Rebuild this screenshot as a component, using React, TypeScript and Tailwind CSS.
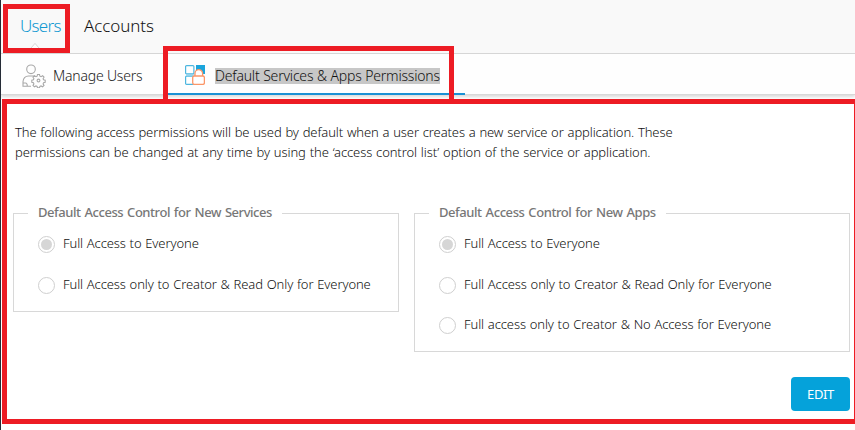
function UserGearIcon() {
  return (
    <svg width="24" height="24" viewBox="0 0 24 24" fill="none" stroke="#a8a8a8" strokeWidth="1.1">
      <circle cx="9" cy="5.3" r="4.3" />
      <path d="M9 22.3H1v-4.500c0-3.600 2.300-5.800 5.600-5.800h4.600c.8 0 1.500.1 2.100.4M1 19h2.500c1.200 0 1.800.7 1.800 3" />
      <circle cx="16.500" cy="16.500" r="1.400" />
      <path d="M15.500 10.500h2l.4 1.700 1.100.5 1.600-.9 1.400 1.400-.9 1.500.5 1.200 1.600.4v2l-1.600.4-.5 1.200.9 1.500-1.400 1.400-1.600-.9-1.100.5-.4 1.400h-2l-.4-1.400-1.100-.5-1.600.9-1.400-1.400.9-1.500-.5-1.200-1.600-.4v-2l1.600-.4.5-1.200-.9-1.500 1.400-1.400 1.600.9 1.100-.5z" />
    </svg>
  );
}

function AppsLockIcon() {
  return (
    <svg width="20" height="20" viewBox="0 0 20 20" fill="none">
      <path d="M1 9h9v2H1z" fill="#d5effa" />
      <path d="M11 0h9v9h-9z" fill="#1ba5dc" />
      <rect x=".6" y=".6" width="8.300" height="8.300" rx="1" fill="white" stroke="#4db6df" strokeWidth="1.200" />
      <rect x=".6" y="11.100" width="8.300" height="8.300" rx="1" fill="white" stroke="#4db6df" strokeWidth="1.200" />
      <path d="M10 11V8.500a3.800 3.800 0 0 1 7.600 0V11" fill="white" stroke="#fb9668" strokeWidth="1.300" />
      <rect x="7.700" y="11" width="11.700" height="8.400" rx="1.600" fill="white" stroke="#fb9668" strokeWidth="1.300" />
    </svg>
  );
}

function Radio({ checked, label }: { checked?: boolean; label: string }) {
  return (
    <label className="flex h-[17px] items-center gap-2">
      <span className="flex size-[17px] shrink-0 items-center justify-center rounded-full border border-[#cfcfcf] bg-white">
        {checked && <span className="size-[11px] rounded-full bg-[#d6d6d6]" />}
      </span>
      <span className="-mt-[2px] whitespace-nowrap text-[13px] leading-[17px] tracking-[-0.1px] text-[#111] [word-spacing:0.5px]">{label}</span>
    </label>
  );
}

export default function App() {
  return (
    <div className="relative h-[430px] w-[855px] overflow-hidden border-l border-[#252b36] bg-white font-['Noto_Sans',sans-serif] font-light">
      <header className="flex h-[54px] border-b border-[#d8d8d8] bg-[#f9f9f9] pl-[19px]">
        <div className="flex w-[64px] flex-col pt-[14px]">
          <span className="text-[17px] leading-6 tracking-[-0.7px] text-[#1098d1]">Users</span>
          <svg className="ml-[5px] mt-[4px]" width="20" height="12" viewBox="0 0 20 12" fill="none">
            <path d="M1 12 10 1.500 19 12z" fill="#fefefe" stroke="#d4d4d4" />
          </svg>
        </div>
        <span className="pt-[14px] text-[17px] leading-6 tracking-[-0.1px] text-[#111]">Accounts</span>
      </header>
      <nav className="flex h-[41px] items-stretch border-b border-[#d8d8d8] bg-[#fefefe] shadow-[0_2px_3px_#00000026]">
        <div className="flex w-[166px] items-center gap-[7px] pl-[21px] pt-[3px]">
          <UserGearIcon />
          <span className="whitespace-nowrap text-[14px] leading-4 tracking-[-0.2px] text-[#222]">Manage Users</span>
        </div>
        <div className="-mb-px flex w-[298px] items-center gap-[10px] border-b-2 border-[#1b91d4] pl-[18px] pt-[3px]">
          <AppsLockIcon />
          <span className="mt-[2px] h-4 whitespace-nowrap bg-[#c7c7c7] text-[14px] leading-4 tracking-[-0.2px] text-[#111] [word-spacing:0.25px]">Default Services &amp; Apps Permissions</span>
        </div>
      </nav>
      <main className="pl-3 pr-[5px] pt-[27px]">
        <p className="ml-[2px] whitespace-nowrap text-[13px] leading-[20px] tracking-[-0.1px] text-[#111]">
          <span className="block [word-spacing:0.52px]">The following access permissions will be used by default when a user creates a new service or application. These</span>
          <span className="block [word-spacing:0.65px]">permissions can be changed at any time by using the ‘access control list’ option of the service or application.</span>
        </p>
        <div className="mt-[41px] flex items-start gap-[15px]">
          <fieldset className="h-[109px] w-[386px] border border-[#d8d8d8] pl-6">
            <legend className="-ml-[10px] h-[20px] w-[254px] whitespace-nowrap px-[10px] text-[13px] font-medium leading-[18px] tracking-[-0.45px] text-[#777] [word-spacing:1px]">Default Access Control for New Services</legend>
            <div className="mt-[13px] flex flex-col gap-6">
              <Radio checked label="Full Access to Everyone" />
              <Radio label="Full Access only to Creator &amp; Read Only for Everyone" />
            </div>
          </fieldset>
          <fieldset className="h-[149px] w-[436px] border border-[#d8d8d8] pl-6">
            <legend className="-ml-[10px] h-[20px] w-[237px] whitespace-nowrap px-[10px] text-[13px] font-medium leading-[18px] tracking-[-0.43px] text-[#777] [word-spacing:1px]">Default Access Control for New Apps</legend>
            <div className="mt-[13px] flex flex-col gap-6">
              <Radio checked label="Full Access to Everyone" />
              <Radio label="Full Access only to Creator &amp; Read Only for Everyone" />
              <div className="-mt-px">
                <Radio label="Full access only to Creator &amp; No Access for Everyone" />
              </div>
            </div>
          </fieldset>
        </div>
        <div className="mt-[25px] flex justify-end">
          <button className="h-[34px] w-[59px] rounded-[4px] bg-[#05a2da] text-[13px] font-normal leading-[32px] tracking-[-0.4px] text-white">EDIT</button>
        </div>
      </main>
      <div className="absolute left-[2px] top-[4px] h-[49px] w-[67px] border-[5px] border-[#ed1c24]" />
      <div className="absolute left-[162px] top-[46px] h-[58px] w-[291px] border-[5px] border-[#ed1c24]" />
      <div className="absolute left-[1px] top-[99px] h-[325px] w-[857px] border-[5px] border-[#ed1c24]" />
    </div>
  );
}
